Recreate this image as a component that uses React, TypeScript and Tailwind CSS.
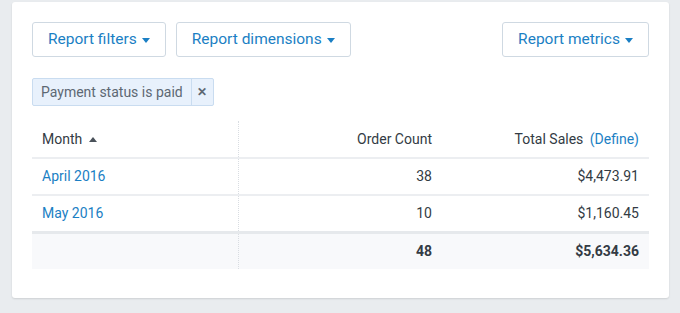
import React from 'react';

const Caret: React.FC<{ up?: boolean; className?: string }> = ({ up, className }) => (
  <svg width="8" height="5" viewBox="0 0 8 5" className={className}>
    {up ? <path d="M0 5 L4 0 L8 5 Z" fill="currentColor" /> : <path d="M0 0 L8 0 L4 5 Z" fill="currentColor" />}
  </svg>
);

const DropButton: React.FC<{ label: string }> = ({ label }) => (
  <button className="h-[35px] px-[15px] flex items-center gap-[5px] border border-[#cfd9e2] rounded-[3px] bg-white text-[15.5px] text-[#1b7fc4]">
    <span>{label}</span>
    <Caret className="text-[#1b7fc4] mt-[1px]" />
  </button>
);

const rows = [
  { month: 'April 2016', count: 38, sales: '$4,473.91' },
  { month: 'May 2016', count: 10, sales: '$1,160.45' },
];

export default function App() {
  return (
    <div className="w-[680px] h-[313px] bg-[#e9ecef] pt-[2px] pl-[12px]" style={{ fontFamily: 'Roboto, "Liberation Sans", sans-serif' }}>
      <div className="w-[657px] h-[296px] bg-white rounded-[3px] shadow-[0_1px_2px_rgba(0,0,0,0.12)] px-[20px] pt-[20px]">
        <div className="flex items-center">
          <div className="flex gap-[10px]">
            <DropButton label="Report filters" />
            <DropButton label="Report dimensions" />
          </div>
          <div className="ml-auto">
            <DropButton label="Report metrics" />
          </div>
        </div>

        <div className="mt-[21px] flex">
          <div className="h-[28px] flex items-stretch border border-[#c9dcf0] bg-[#e8f1fc] rounded-[2px] text-[14px] text-[#5d6873]">
            <span className="flex items-center px-[8px]">Payment status is paid</span>
            <span className="flex items-center justify-center w-[22px] border-l border-[#c9dcf0] text-[#5d6873] font-bold text-[12px]">✕</span>
          </div>
        </div>

        <table className="mt-[15px] w-full table-fixed border-collapse text-[14px] text-[#333b44]">
          <colgroup>
            <col className="w-[206px]" />
            <col className="w-[204px]" />
            <col />
          </colgroup>
          <thead>
            <tr className="h-[37px] border-b-2 border-[#eceef1]">
              <th className="text-left font-normal px-[10px] border-r border-dotted border-[#d9dde2]">
                <span className="inline-flex items-center gap-[7px]">
                  Month <Caret up className="text-[#4a525a]" />
                </span>
              </th>
              <th className="text-right font-normal px-[10px]">Order Count</th>
              <th className="text-right font-normal px-[10px]">
                Total Sales <span className="ml-[3px] text-[#1b7fc4]">(Define)</span>
              </th>
            </tr>
          </thead>
          <tbody>
            {rows.map((r) => (
              <tr key={r.month} className="h-[37px] border-b-2 border-[#eceef1]">
                <td className="px-[10px] text-[#1b7fc4] border-r border-dotted border-[#d9dde2]">{r.month}</td>
                <td className="px-[10px] text-right">{r.count}</td>
                <td className="px-[10px] text-right">{r.sales}</td>
              </tr>
            ))}
          </tbody>
          <tfoot>
            <tr className="h-[37px] bg-[#f8f9fb] border-t-[3px] border-[#e6e9ec] font-bold">
              <td className="px-[10px] border-r border-dotted border-[#d9dde2]"></td>
              <td className="px-[10px] text-right">48</td>
              <td className="px-[10px] text-right">$5,634.36</td>
            </tr>
          </tfoot>
        </table>
      </div>
    </div>
  );
}
